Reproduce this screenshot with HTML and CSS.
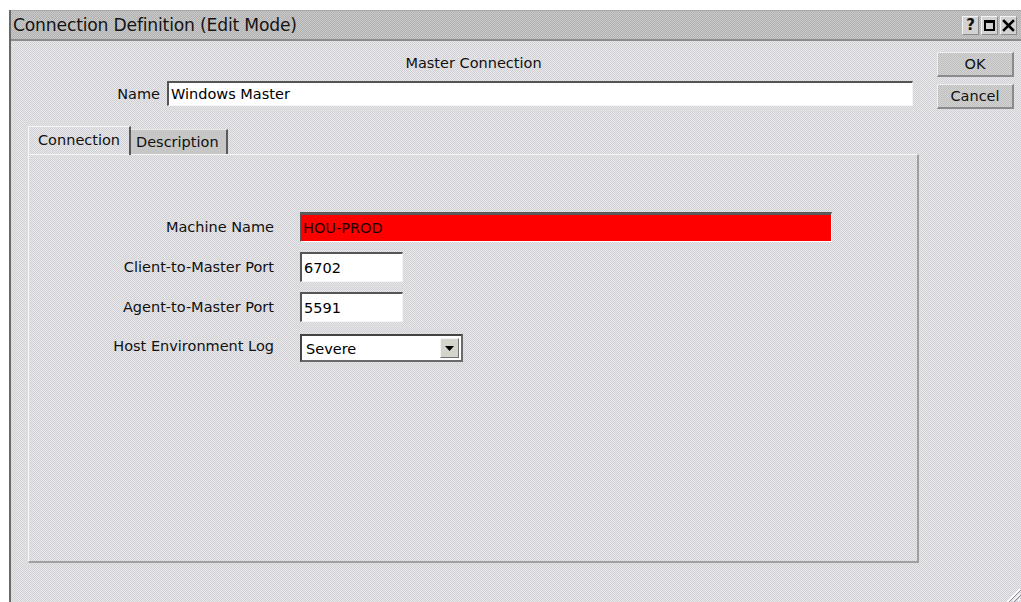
FILE: index.html
```html
<!DOCTYPE html>
<html lang="en">
<head>
<meta charset="utf-8">
<title>Connection Definition (Edit Mode)</title>
<link rel="stylesheet" href="styles.css">
</head>
<body>
<div class="window">
  <div class="titlebar">
    <span class="title">Connection Definition (Edit Mode)</span>
    <div class="caption-buttons">
      <span class="cap-btn cap-help">?</span>
      <span class="cap-btn"><span class="max-box"></span></span>
      <span class="cap-btn">
        <svg width="13" height="13" viewBox="0 0 13 13"><path d="M2 2 L11 11 M11 2 L2 11" stroke="#000" stroke-width="2.6" stroke-linecap="square"/></svg>
      </span>
    </div>
  </div>
  <div class="body">
    <div class="main">
      <div class="heading">Master Connection</div>
      <div class="name-row">
        <label class="name-label">Name</label>
        <div class="field name-field">Windows Master</div>
      </div>
      <div class="tabs">
        <div class="tab tab-active">Connection</div>
        <div class="tab tab-inactive">Description</div>
      </div>
      <div class="panel">
        <div class="form">
          <label class="form-label">Machine Name</label>
          <div class="field field-wide field-error">HOU-PROD</div>
          <label class="form-label">Client-to-Master Port</label>
          <div class="field field-port">6702</div>
          <label class="form-label">Agent-to-Master Port</label>
          <div class="field field-port">5591</div>
          <label class="form-label form-label-log">Host Environment Log</label>
          <div class="field select">
            <span class="select-value">Severe</span>
            <span class="select-btn">
              <svg width="9" height="5" viewBox="0 0 9 5"><path d="M0 0 H9 L4.5 5 Z" fill="#000"/></svg>
            </span>
          </div>
        </div>
      </div>
    </div>
    <div class="actions">
      <div class="btn">OK</div>
      <div class="btn">Cancel</div>
    </div>
  </div>
  <svg class="grip" width="16" height="14" viewBox="0 0 16 14">
    <path d="M15 1 L2 14 M15 6 L8 13 M15 11 L13 13" stroke="#ffffff" stroke-width="1.5"/>
    <path d="M16 2 L3 15 M16 7 L9 14" stroke="#8a8a9a" stroke-width="1"/>
  </svg>
</div>
</body>
</html>
```

FILE: styles.css
```css
* { box-sizing: border-box; }

html, body {
  margin: 0;
  padding: 0;
  width: 1021px;
  height: 602px;
  overflow: hidden;
  background: #ffffff;
  font-family: "DejaVu Sans", Verdana, sans-serif;
  color: #111;
}

.window {
  position: relative;
  margin: 10px 0 0 9px;
  height: 592px;
  border-left: 2px solid #6a6a6a;
  background-color: #dcdcdf;
  background-image: repeating-conic-gradient(#d0d0d5 0 25%, #e8e8ea 0 50%);
  background-size: 2px 2px;
  display: flex;
  flex-direction: column;
}

/* caption bar */
.titlebar {
  height: 31px;
  display: flex;
  align-items: center;
  justify-content: space-between;
  padding: 0 4px 0 2px;
  background-color: #bcbcbc;
  background-image: repeating-conic-gradient(#b0b0b0 0 25%, #cacaca 0 50%);
  background-size: 2px 2px;
  border-top: 1px solid #a8a8a8;
  border-bottom: 2px solid #8c8c8c;
}

.title {
  font-size: 17.2px;
  color: #141414;
  letter-spacing: -0.2px;
}

.caption-buttons {
  display: flex;
  gap: 2px;
}

.cap-btn {
  width: 17px;
  height: 19px;
  display: flex;
  align-items: center;
  justify-content: center;
  background: #d2d2d2;
  border-top: 1px solid #f2f2f2;
  border-left: 1px solid #f2f2f2;
  border-right: 1px solid #8a8a8a;
  border-bottom: 1px solid #8a8a8a;
}

.cap-help {
  font-weight: bold;
  font-size: 15px;
  line-height: 1;
}

.max-box {
  width: 11px;
  height: 11px;
  border: 2px solid #000;
  border-top-width: 3px;
}

/* dialog body */
.body {
  flex: 1;
  display: flex;
  padding-left: 17px;
}

.main {
  width: 891px;
  display: flex;
  flex-direction: column;
}

.heading {
  text-align: center;
  font-size: 14.5px;
  margin-top: 14px;
  height: 16px;
  line-height: 16px;
}

.name-row {
  display: flex;
  align-items: center;
  margin-top: 10px;
  gap: 7px;
}

.name-label {
  width: 132px;
  text-align: right;
  font-size: 14.5px;
}

.field {
  background: #ffffff;
  border-top: 2px solid #555555;
  border-left: 2px solid #555555;
  border-right: 1px solid #f4f4f4;
  border-bottom: 1px solid #f4f4f4;
  font-size: 14.5px;
  display: flex;
  align-items: center;
  padding-left: 2px;
  color: #000;
}

.name-field {
  width: 746px;
  height: 25px;
}

/* tab strip */
.tabs {
  display: flex;
  align-items: flex-end;
  margin-top: 19px;
  height: 29px;
}

.tab {
  font-size: 14.5px;
  display: flex;
  align-items: center;
}

.tab-active {
  width: 103px;
  height: 29px;
  padding-left: 9px;
  padding-bottom: 2px;
  border-top: 1px solid #f6f6f6;
  border-left: 1px solid #f6f6f6;
  border-right: 2px solid #5a5a5a;
  position: relative;
  z-index: 1;
  margin-bottom: -1px;
}

.tab-inactive {
  width: 97px;
  height: 25px;
  padding-left: 5px;
  background: #c6c6c6;
  border-top: 1px solid #e8e8e8;
  border-right: 2px solid #5a5a5a;
}

.panel {
  height: 409px;
  border-top: 1px solid #f6f6f6;
  border-left: 1px solid #f6f6f6;
  border-right: 2px solid #a0a0a0;
  border-bottom: 2px solid #a0a0a0;
}

.form {
  display: grid;
  grid-template-columns: 245px auto;
  justify-content: start;
  align-items: center;
  column-gap: 26px;
  row-gap: 10px;
  margin-top: 57px;
}

.form-label {
  text-align: right;
  font-size: 14.5px;
}

.form-label-log {
  margin-top: -3px;
}

.field-wide {
  width: 532px;
  height: 30px;
}

.field-error {
  background: #ff0000;
  color: #1a0000;
  border-top: 3px solid #5a5a5a;
  border-left: 1px solid #5a5a5a;
  border-right: 1px solid #ffffff;
  border-bottom: 1px solid #ffffff;
}

.field-port {
  width: 103px;
  height: 30px;
}

.select {
  width: 163px;
  height: 28px;
  margin-top: 2px;
  justify-content: space-between;
  padding-right: 2px;
  border: 2px solid #444;
  border-right-color: #6a6a6a;
  border-bottom-color: #6a6a6a;
}

.select-value {
  padding-left: 2px;
  padding-top: 2px;
}

.select-btn {
  width: 19px;
  height: 20px;
  display: flex;
  align-items: center;
  justify-content: center;
  background: #d4d4cc;
  border-top: 1px solid #f4f4f4;
  border-left: 1px solid #f4f4f4;
  border-right: 1px solid #707070;
  border-bottom: 1px solid #707070;
}

/* OK / Cancel */
.actions {
  display: flex;
  flex-direction: column;
  gap: 7px;
  margin-left: 18px;
  margin-top: 11px;
}

.btn {
  width: 77px;
  height: 25px;
  display: flex;
  align-items: center;
  justify-content: center;
  font-size: 14.5px;
  background-color: #c8c8c8;
  background-image: repeating-conic-gradient(#bebebe 0 25%, #d4d4d4 0 50%);
  background-size: 2px 2px;
  border-top: 1px solid #eeeeee;
  border-left: 1px solid #eeeeee;
  border-right: 2px solid #8a8a8a;
  border-bottom: 2px solid #8a8a8a;
  color: #111;
}

.grip {
  position: absolute;
  right: 0;
  bottom: 0;
}
```
